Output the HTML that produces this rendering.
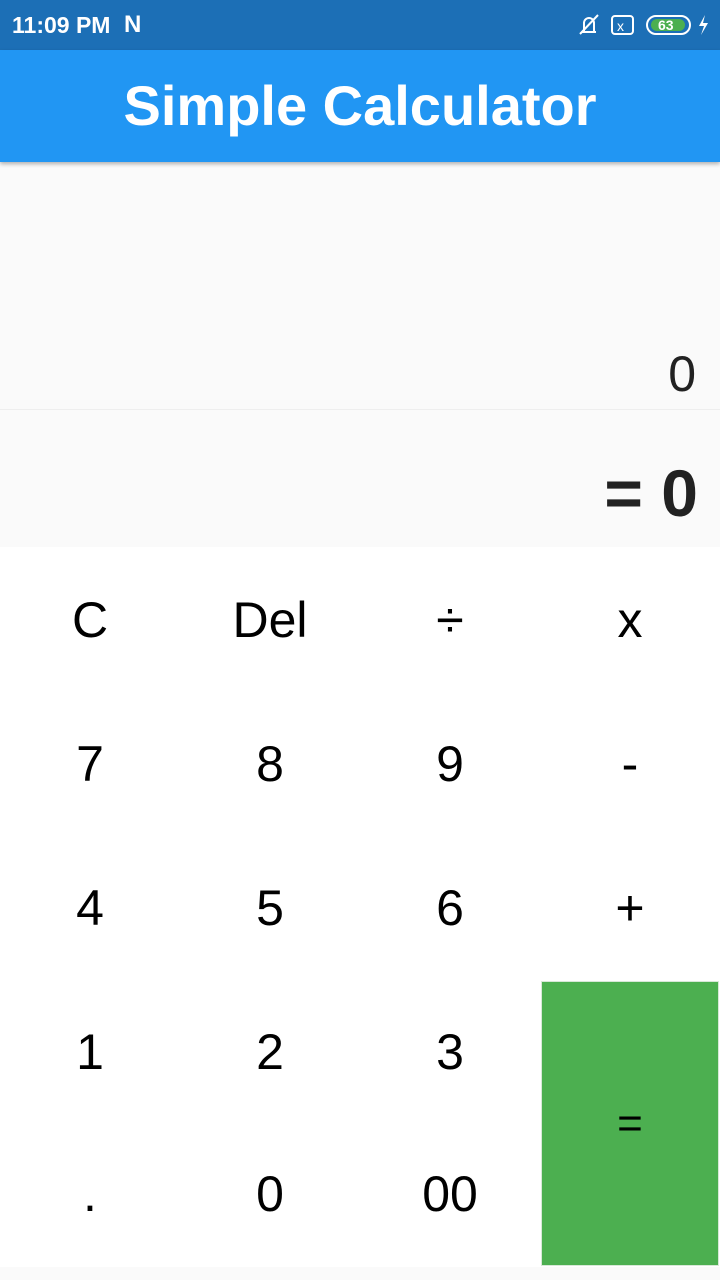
<!DOCTYPE html><html><head><style>
body{margin:0;width:720px;height:1280px;position:relative;font-family:"Liberation Sans",sans-serif;background:#fafafa;overflow:hidden}
.sb{position:absolute;top:0;left:0;width:720px;height:50px;background:#1c6fb6;color:#fff}
.ab{position:absolute;top:50px;left:0;width:720px;height:112px;background:#2196f3;color:#fff;font-weight:bold;font-size:56px;text-align:center;line-height:112px;box-shadow:0 2px 4px rgba(0,0,0,.3)}
.d1{position:absolute;right:24px;top:345px;font-size:50px;color:#222}
.div{position:absolute;top:409px;left:0;width:720px;height:1px;background:#eee}
.d2{position:absolute;right:22px;top:455px;font-size:66px;font-weight:bold;color:#222}
.pad{position:absolute;top:547px;left:0;width:720px;height:720px;background:#fff}
.b{position:absolute;width:180px;height:144px;text-align:center;line-height:144px;font-size:50px;color:#000}
.eq{position:absolute;left:542px;top:982px;width:176px;height:283px;background:#4caf50;font-size:44px;line-height:283px;text-align:center;outline:1px solid #d8e8d8}
</style></head><body>
<div class="sb"><span style="position:absolute;left:12px;top:12px;font-size:23px;font-weight:bold">11:09 PM</span>
<span style="position:absolute;left:124px;top:11px;font-size:24px;font-weight:bold">N</span>
<svg style="position:absolute;left:575px;top:12px" width="140" height="26"><path d="M7 20h14M9 20V11a5 5 0 0 1 10 0v9M5 22L23 3" stroke="#fff" stroke-width="2" fill="none"/><rect x="37" y="4" width="21" height="18" rx="3" stroke="#fff" stroke-width="2" fill="none"/><text x="42" y="19" font-size="14" fill="#fff" font-family="Liberation Sans">x</text><rect x="72" y="4" width="43" height="18" rx="9" stroke="#fff" stroke-width="2" fill="none"/><rect x="76" y="7" width="34" height="12" rx="6" fill="#4caf50"/><text x="83" y="18" font-size="14" font-weight="bold" fill="#fff" font-family="Liberation Sans">63</text><path d="M130 3l-6 11h5l-3 9 7-12h-5z" fill="#fff"/></svg></div>
<div class="ab">Simple Calculator</div>
<div class="d1">0</div><div class="div"></div><div class="d2">= 0</div>
<div class="pad"></div>
<div class="b" style="left:0;top:548px">C</div><div class="b" style="left:180px;top:548px">Del</div><div class="b" style="left:360px;top:548px">÷</div><div class="b" style="left:540px;top:548px">x</div>
<div class="b" style="left:0;top:692px">7</div><div class="b" style="left:180px;top:692px">8</div><div class="b" style="left:360px;top:692px">9</div><div class="b" style="left:540px;top:692px">-</div>
<div class="b" style="left:0;top:836px">4</div><div class="b" style="left:180px;top:836px">5</div><div class="b" style="left:360px;top:836px">6</div><div class="b" style="left:540px;top:836px">+</div>
<div class="b" style="left:0;top:980px">1</div><div class="b" style="left:180px;top:980px">2</div><div class="b" style="left:360px;top:980px">3</div>
<div class="b" style="left:0;top:1122px">.</div><div class="b" style="left:180px;top:1122px">0</div><div class="b" style="left:360px;top:1122px">00</div>
<div class="eq">=</div>
</body></html>
